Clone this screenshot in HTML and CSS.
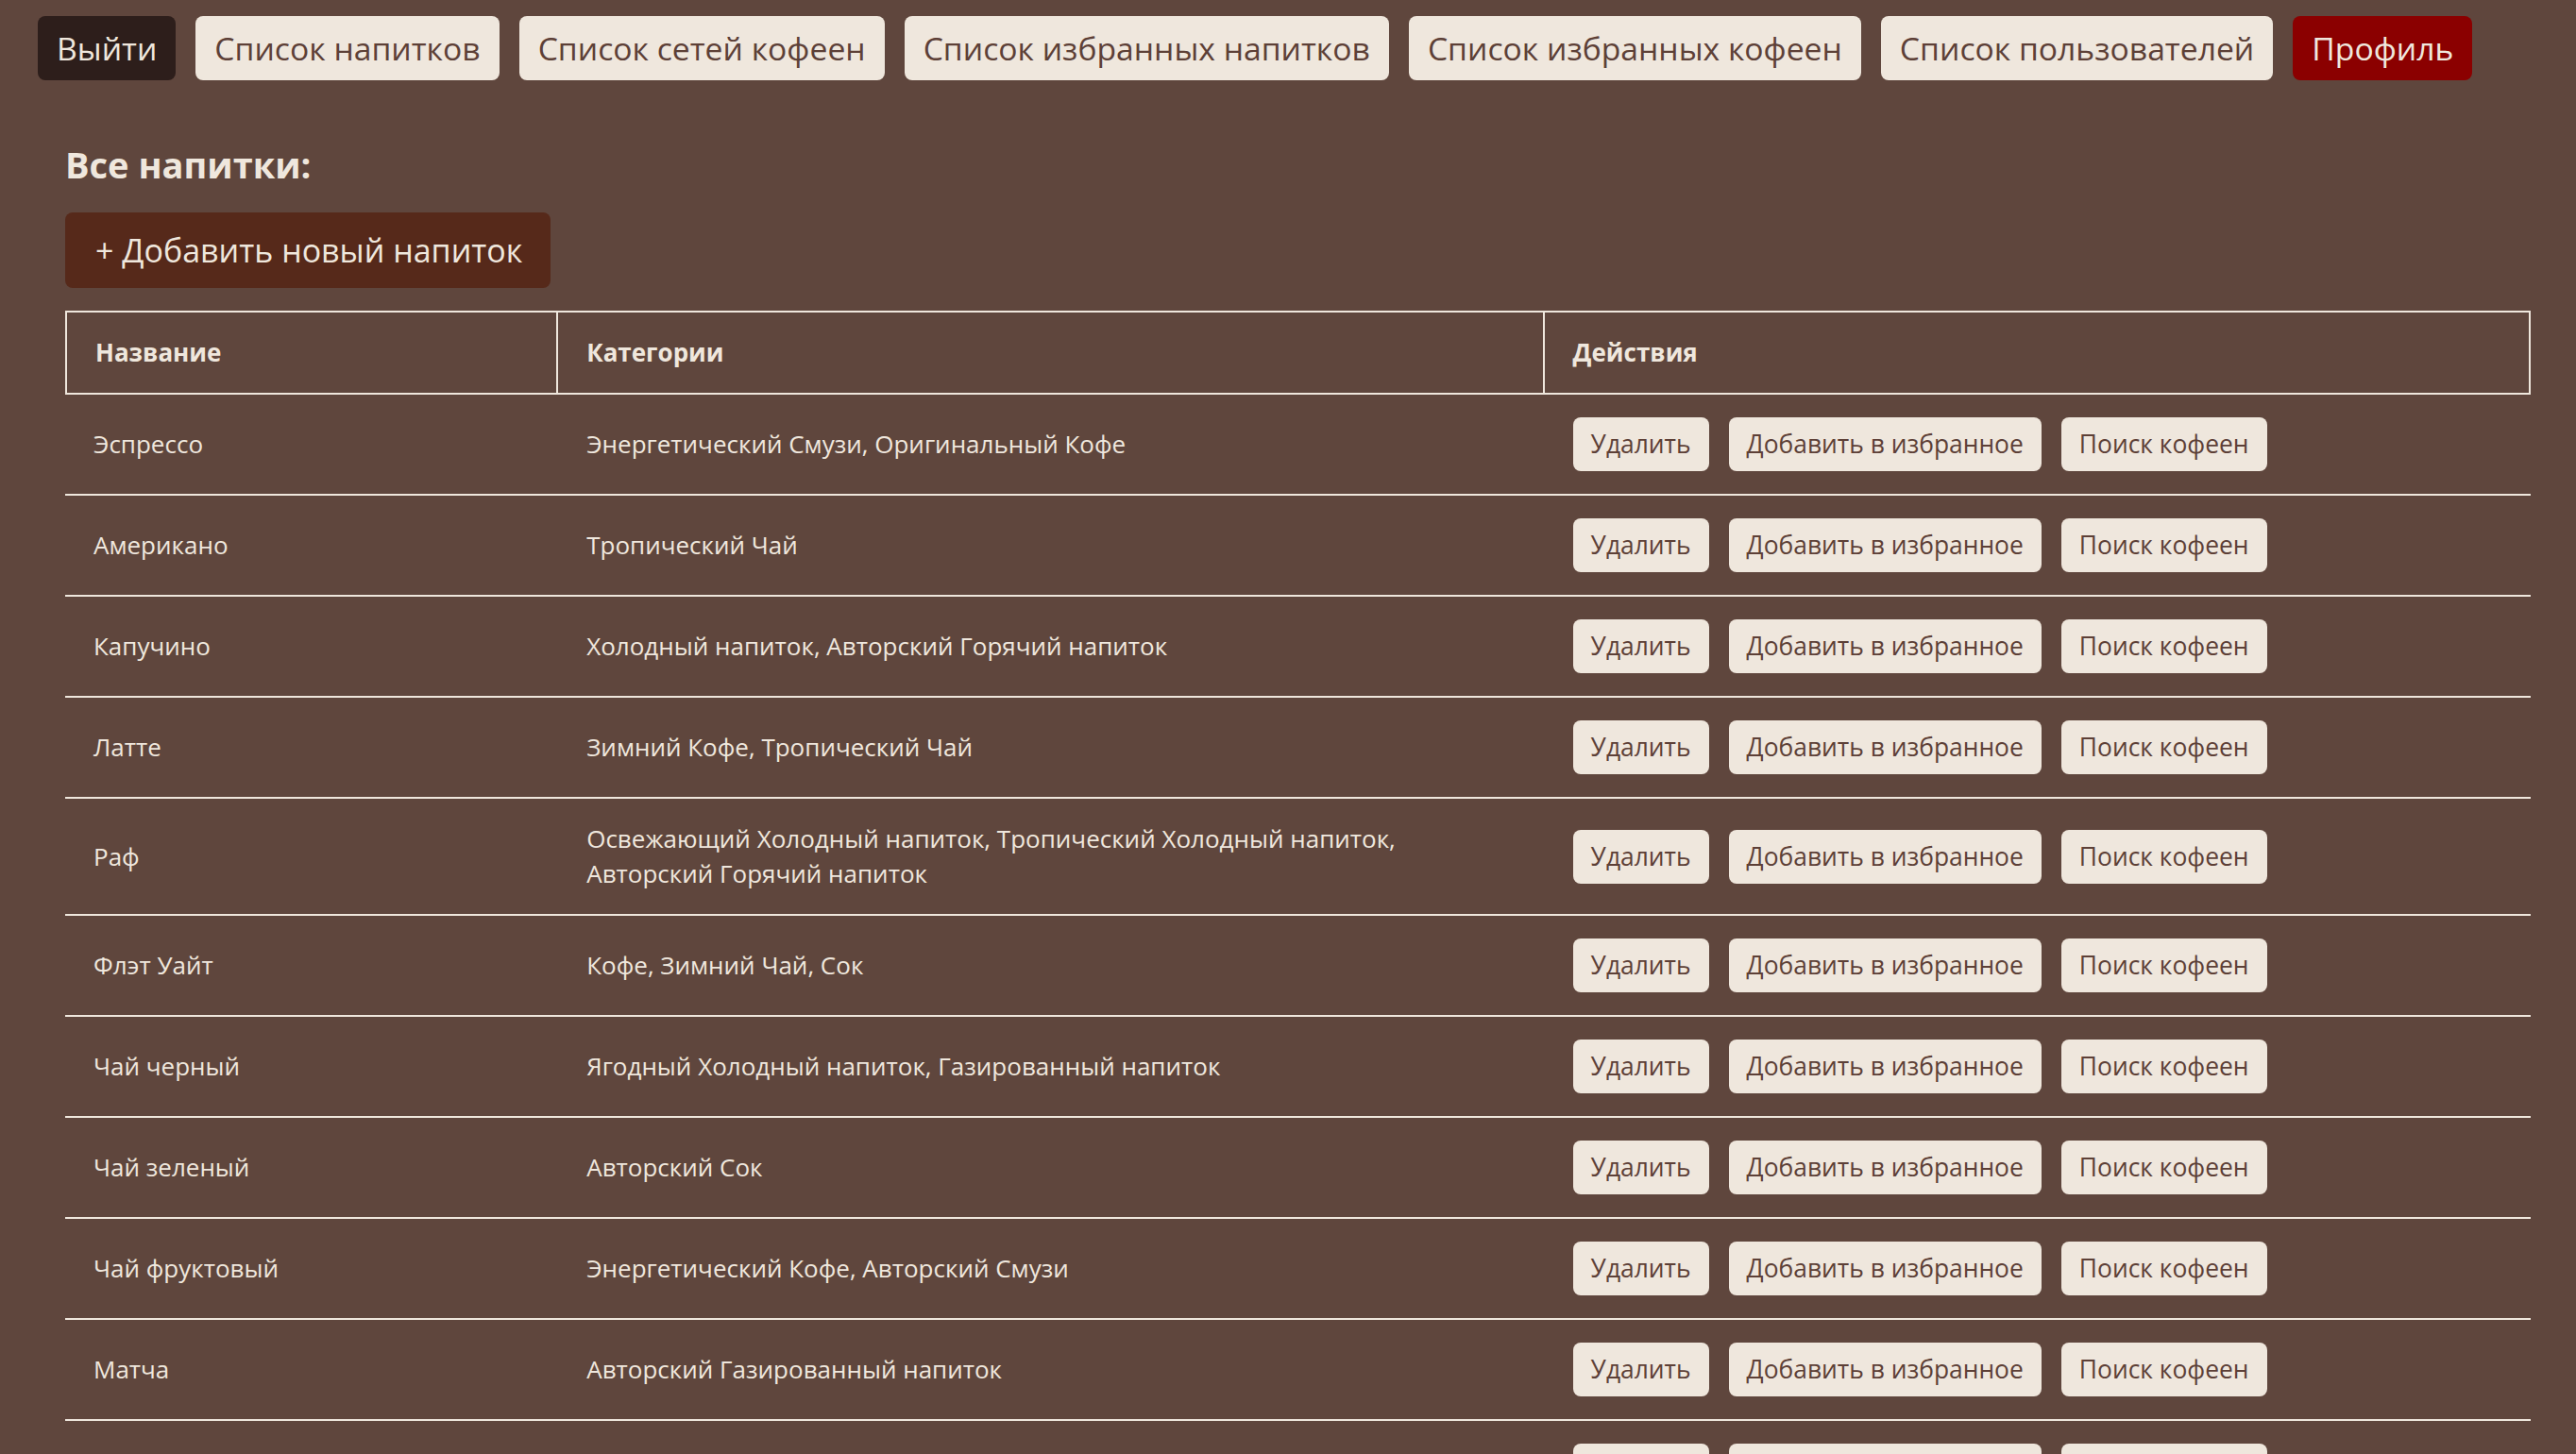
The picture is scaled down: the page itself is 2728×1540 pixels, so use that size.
FILE: index.html
```html
<!DOCTYPE html>
<html lang="ru">
<head>
<meta charset="utf-8">
<title>Все напитки</title>
<link rel="stylesheet" href="styles.css">
</head>
<body>
<nav class="nav">
  <button class="nav-btn nav-dark">Выйти</button>
  <button class="nav-btn">Список напитков</button>
  <button class="nav-btn">Список сетей кофеен</button>
  <button class="nav-btn">Список избранных напитков</button>
  <button class="nav-btn">Список избранных кофеен</button>
  <button class="nav-btn">Список пользователей</button>
  <button class="nav-btn nav-red">Профиль</button>
</nav>
<main class="main">
  <h2 class="title">Все напитки:</h2>
  <div class="add-wrap"><button class="add-btn">+ Добавить новый напиток</button></div>
  <table class="table">
    <colgroup><col class="c1"><col class="c2"><col class="c3"></colgroup>
    <thead>
      <tr><th>Название</th><th>Категории</th><th>Действия</th></tr>
    </thead>
    <tbody>
      <tr><td>Эспрессо</td><td>Энергетический Смузи, Оригинальный Кофе</td><td><div class="acts"><button class="act">Удалить</button><button class="act">Добавить в избранное</button><button class="act">Поиск кофеен</button></div></td></tr>
      <tr><td>Американо</td><td>Тропический Чай</td><td><div class="acts"><button class="act">Удалить</button><button class="act">Добавить в избранное</button><button class="act">Поиск кофеен</button></div></td></tr>
      <tr><td>Капучино</td><td>Холодный напиток, Авторский Горячий напиток</td><td><div class="acts"><button class="act">Удалить</button><button class="act">Добавить в избранное</button><button class="act">Поиск кофеен</button></div></td></tr>
      <tr><td>Латте</td><td>Зимний Кофе, Тропический Чай</td><td><div class="acts"><button class="act">Удалить</button><button class="act">Добавить в избранное</button><button class="act">Поиск кофеен</button></div></td></tr>
      <tr><td>Раф</td><td>Освежающий Холодный напиток, Тропический Холодный напиток, Авторский Горячий напиток</td><td><div class="acts"><button class="act">Удалить</button><button class="act">Добавить в избранное</button><button class="act">Поиск кофеен</button></div></td></tr>
      <tr><td>Флэт Уайт</td><td>Кофе, Зимний Чай, Сок</td><td><div class="acts"><button class="act">Удалить</button><button class="act">Добавить в избранное</button><button class="act">Поиск кофеен</button></div></td></tr>
      <tr><td>Чай черный</td><td>Ягодный Холодный напиток, Газированный напиток</td><td><div class="acts"><button class="act">Удалить</button><button class="act">Добавить в избранное</button><button class="act">Поиск кофеен</button></div></td></tr>
      <tr><td>Чай зеленый</td><td>Авторский Сок</td><td><div class="acts"><button class="act">Удалить</button><button class="act">Добавить в избранное</button><button class="act">Поиск кофеен</button></div></td></tr>
      <tr><td>Чай фруктовый</td><td>Энергетический Кофе, Авторский Смузи</td><td><div class="acts"><button class="act">Удалить</button><button class="act">Добавить в избранное</button><button class="act">Поиск кофеен</button></div></td></tr>
      <tr><td>Матча</td><td>Авторский Газированный напиток</td><td><div class="acts"><button class="act">Удалить</button><button class="act">Добавить в избранное</button><button class="act">Поиск кофеен</button></div></td></tr>
      <tr><td>Какао</td><td>Горячий напиток</td><td><div class="acts"><button class="act">Удалить</button><button class="act">Добавить в избранное</button><button class="act">Поиск кофеен</button></div></td></tr>
    </tbody>
  </table>
</main>
</body>
</html>
```
FILE: styles.css
```css
html, body {
  margin: 0;
  padding: 0;
  overflow: hidden;
}
body {
  background: #5f463d;
  color: #efe7dd;
  font-family: "Open Sans", "Noto Sans", sans-serif;
  font-size: 26px;
}
button {
  font-family: inherit;
  border: none;
  cursor: pointer;
}
.nav {
  display: flex;
  gap: 21px;
  padding: 17px 40px 0 40px;
}
.nav-btn {
  height: 68px;
  padding: 0 20px;
  font-size: 33.7px;
  line-height: 48px;
  border-radius: 8px;
  background: #efe7dd;
  color: #5d4037;
}
.nav-dark {
  background: #2d1e1b;
  color: #efe7dd;
}
.nav-red {
  background: #8b0000;
  color: #efe7dd;
}
.main {
  padding: 0 48px 0 69px;
}
.title {
  margin: 65px 0 27px 0;
  font-size: 38px;
  line-height: 48px;
  font-weight: 700;
}
.add-wrap {
  margin-bottom: 24px;
}
.add-btn {
  height: 80px;
  padding: 0 30px 0 32px;
  font-size: 34px;
  border-radius: 8px;
  background: #56291a;
  color: #efe7dd;
}
.table {
  width: 100%;
  table-layout: fixed;
  border-collapse: separate;
  border-spacing: 0;
}
.c1 { width: 20%; }
.c2 { width: 40%; }
.c3 { width: 40%; }
.table th {
  text-align: left;
  font-weight: 700;
  font-size: 26px;
  line-height: 37px;
  padding: 24px 30px;
  border-top: 2px solid #efe7dd;
  border-bottom: 2px solid #efe7dd;
  border-right: 2px solid #efe7dd;
}
.table th:first-child {
  border-left: 2px solid #efe7dd;
}
.table td {
  padding: 24px 30px;
  line-height: 37px;
  vertical-align: middle;
  border-bottom: 2px solid #efe7dd;
}
.acts {
  display: flex;
  gap: 21px;
}
.act {
  height: 57px;
  padding: 0 19px;
  font-size: 26.4px;
  line-height: 37px;
  border-radius: 8px;
  background: #efe7dd;
  color: #5d4037;
}
```
